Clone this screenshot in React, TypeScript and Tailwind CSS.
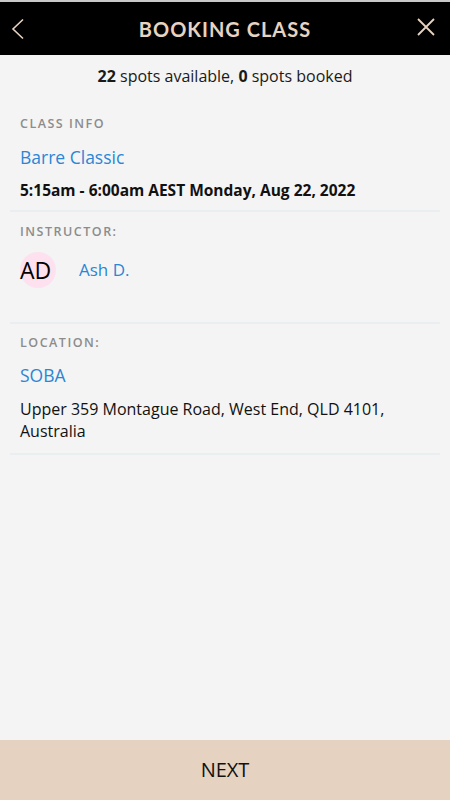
const body = "font-['Open_Sans',sans-serif]";

function Label({ children }: { children: string }) {
  return (
    <div className="text-[12.5px] font-semibold uppercase tracking-[1.5px] text-[#8c8c8c]">
      {children}
    </div>
  );
}

export default function App() {
  return (
    <div className={`flex h-[800px] w-[450px] flex-col bg-[#f4f4f4] ${body}`}>
      <div className="h-[2px] bg-[#c9c9c9]" />
      <header className="relative flex h-[53px] items-center justify-center bg-black">
        <svg className="absolute left-[11px] top-[16px]" width="14" height="22" viewBox="0 0 14 22" fill="none">
          <path d="M12 1.5 L2 11 L12 20.5" stroke="#e6d3c2" strokeWidth="1.6" />
        </svg>
        <h1 className="font-['Lato',sans-serif] text-[20px] font-bold tracking-[1px] text-[#e6d3c2]">
          BOOKING CLASS
        </h1>
        <svg className="absolute left-[417px] top-[16px]" width="18" height="18" viewBox="0 0 18 18" fill="none">
          <path d="M1 1 L17 17 M17 1 L1 17" stroke="#e6d3c2" strokeWidth="1.8" />
        </svg>
      </header>

      <p className="mt-[9px] text-center text-[16px] text-[#1a1a1a]">
        <b>22</b> spots available, <b>0</b> spots booked
      </p>

      <section className="mx-[10px] mt-[27px] border-b-2 border-[#e9eef1] px-[10px] pb-[8px]">
        <Label>CLASS INFO</Label>
        <div className="mt-[10px] text-[17.5px] text-[#2b86d6]">Barre Classic</div>
        <div className="mt-[9px] text-[15.5px] font-bold text-[#111]">
          5:15am - 6:00am AEST Monday, Aug 22, 2022
        </div>
      </section>

      <section className="mx-[10px] mt-[11px] h-[101px] border-b-2 border-[#e9eef1] px-[10px]">
        <Label>INSTRUCTOR:</Label>
        <div className="mt-[10px] flex items-center">
          <div className="flex h-[36px] w-[36px] items-center rounded-full bg-[#fde1ef]">
            <span className="text-[23px] leading-none text-black">AD</span>
          </div>
          <span className="ml-[23px] text-[17px] text-[#2b86d6]">Ash D.</span>
        </div>
      </section>

      <section className="mx-[10px] mt-[10px] border-b-2 border-[#e9eef1] px-[10px] pb-[11px]">
        <Label>LOCATION:</Label>
        <div className="mt-[9px] text-[17.5px] text-[#2b86d6]">SOBA</div>
        <div className="mt-[10px] text-[16px] leading-[22px] text-[#111]">
          Upper 359 Montague Road, West End, QLD 4101, Australia
        </div>
      </section>

      <div className="flex-1" />
      <footer className="flex h-[60px] items-center justify-center bg-[#e5d2c1] text-[20px] text-[#111]">
        NEXT
      </footer>
    </div>
  );
}
